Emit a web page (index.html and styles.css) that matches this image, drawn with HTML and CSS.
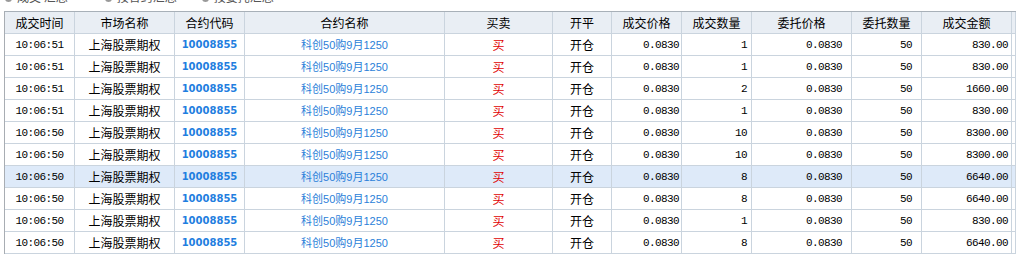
FILE: index.html
```html
<!DOCTYPE html>
<html lang="zh">
<head>
<meta charset="utf-8">
<link rel="stylesheet" href="styles.css">
</head>
<body>
<div class="tabs">
  <span class="tab"><i class="dot"></i>成交 汇总</span>
  <span class="tab t2"><i class="dot"></i>按合约汇总</span>
  <span class="tab t3"><i class="dot"></i>按委托汇总</span>
</div>
<div class="grid">
  <div class="row head">
    <div class="c">成交时间</div><div class="c">市场名称</div><div class="c">合约代码</div><div class="c">合约名称</div><div class="c">买卖</div><div class="c">开平</div><div class="c">成交价格</div><div class="c">成交数量</div><div class="c">委托价格</div><div class="c">委托数量</div><div class="c">成交金额</div><div class="c"></div>
  </div>
  <div class="row"><div class="c m">10:06:51</div><div class="c">上海股票期权</div><div class="c code">10008855</div><div class="c name">科创50购9月1250</div><div class="c buy">买</div><div class="c">开仓</div><div class="c m r p7">0.0830</div><div class="c m r p8">1</div><div class="c m r p9">0.0830</div><div class="c m r p10">50</div><div class="c m r p11">830.00</div><div class="c"></div></div>
  <div class="row"><div class="c m">10:06:51</div><div class="c">上海股票期权</div><div class="c code">10008855</div><div class="c name">科创50购9月1250</div><div class="c buy">买</div><div class="c">开仓</div><div class="c m r p7">0.0830</div><div class="c m r p8">1</div><div class="c m r p9">0.0830</div><div class="c m r p10">50</div><div class="c m r p11">830.00</div><div class="c"></div></div>
  <div class="row"><div class="c m">10:06:51</div><div class="c">上海股票期权</div><div class="c code">10008855</div><div class="c name">科创50购9月1250</div><div class="c buy">买</div><div class="c">开仓</div><div class="c m r p7">0.0830</div><div class="c m r p8">2</div><div class="c m r p9">0.0830</div><div class="c m r p10">50</div><div class="c m r p11">1660.00</div><div class="c"></div></div>
  <div class="row"><div class="c m">10:06:51</div><div class="c">上海股票期权</div><div class="c code">10008855</div><div class="c name">科创50购9月1250</div><div class="c buy">买</div><div class="c">开仓</div><div class="c m r p7">0.0830</div><div class="c m r p8">1</div><div class="c m r p9">0.0830</div><div class="c m r p10">50</div><div class="c m r p11">830.00</div><div class="c"></div></div>
  <div class="row"><div class="c m">10:06:50</div><div class="c">上海股票期权</div><div class="c code">10008855</div><div class="c name">科创50购9月1250</div><div class="c buy">买</div><div class="c">开仓</div><div class="c m r p7">0.0830</div><div class="c m r p8">10</div><div class="c m r p9">0.0830</div><div class="c m r p10">50</div><div class="c m r p11">8300.00</div><div class="c"></div></div>
  <div class="row"><div class="c m">10:06:50</div><div class="c">上海股票期权</div><div class="c code">10008855</div><div class="c name">科创50购9月1250</div><div class="c buy">买</div><div class="c">开仓</div><div class="c m r p7">0.0830</div><div class="c m r p8">10</div><div class="c m r p9">0.0830</div><div class="c m r p10">50</div><div class="c m r p11">8300.00</div><div class="c"></div></div>
  <div class="row sel"><div class="c m">10:06:50</div><div class="c">上海股票期权</div><div class="c code">10008855</div><div class="c name">科创50购9月1250</div><div class="c buy">买</div><div class="c">开仓</div><div class="c m r p7">0.0830</div><div class="c m r p8">8</div><div class="c m r p9">0.0830</div><div class="c m r p10">50</div><div class="c m r p11">6640.00</div><div class="c"></div></div>
  <div class="row"><div class="c m">10:06:50</div><div class="c">上海股票期权</div><div class="c code">10008855</div><div class="c name">科创50购9月1250</div><div class="c buy">买</div><div class="c">开仓</div><div class="c m r p7">0.0830</div><div class="c m r p8">8</div><div class="c m r p9">0.0830</div><div class="c m r p10">50</div><div class="c m r p11">6640.00</div><div class="c"></div></div>
  <div class="row"><div class="c m">10:06:50</div><div class="c">上海股票期权</div><div class="c code">10008855</div><div class="c name">科创50购9月1250</div><div class="c buy">买</div><div class="c">开仓</div><div class="c m r p7">0.0830</div><div class="c m r p8">1</div><div class="c m r p9">0.0830</div><div class="c m r p10">50</div><div class="c m r p11">830.00</div><div class="c"></div></div>
  <div class="row"><div class="c m">10:06:50</div><div class="c">上海股票期权</div><div class="c code">10008855</div><div class="c name">科创50购9月1250</div><div class="c buy">买</div><div class="c">开仓</div><div class="c m r p7">0.0830</div><div class="c m r p8">8</div><div class="c m r p9">0.0830</div><div class="c m r p10">50</div><div class="c m r p11">6640.00</div><div class="c"></div></div>
</div>
</body>
</html>
```
FILE: styles.css
```css
html, body {
  margin: 0;
  padding: 0;
  height: 254px;
  overflow: hidden;
  background: #fff;
}
body {
  font-family: "Noto Sans CJK SC", sans-serif;
  font-size: 12px;
  color: #000;
}
.tabs {
  height: 11px;
  overflow: hidden;
  display: flex;
  align-items: flex-start;
}
.tab {
  display: flex;
  align-items: flex-end;
  gap: 5px;
  color: #555;
  font-size: 12px;
  line-height: 12px;
  padding-left: 5px;
  margin-top: -9px;
}
.t2 { margin-left: 32px; }
.t3 { margin-left: 20px; }
.dot {
  display: block;
  width: 7px;
  height: 7px;
  border-radius: 50%;
  background: #999;
  margin-bottom: 1px;
}
.grid {
  margin-left: 4px;
  border-left: 1px solid #a8adb3;
  border-top: 1px solid #a8b0b8;
}
.row {
  display: grid;
  grid-template-columns: 70px 100px 70px 200px 108px 59px 70px 70px 100px 70px 90px 1fr;
  height: 22px;
}
.head {
  background: #e9eef4;
}
.sel {
  background: #deeaf9;
}
.c {
  box-sizing: border-box;
  border-right: 1px solid #cad4de;
  border-bottom: 1px solid #cad4de;
  display: flex;
  align-items: center;
  justify-content: center;
  white-space: nowrap;
  overflow: hidden;
  line-height: 14px;
}
.m {
  font-family: "Liberation Mono", monospace;
  font-size: 11px;
  letter-spacing: -0.6px;
}
.r { justify-content: flex-end; }
.p7 { padding-right: 2px; }
.p8 { padding-right: 4px; }
.p9 { padding-right: 9px; }
.p10 { padding-right: 9px; }
.p11 { padding-right: 3px; }
.code {
  font-family: "DejaVu Sans", sans-serif;
  font-weight: bold;
  font-size: 10px;
  color: #1f7ee0;
}
.name {
  font-family: "Liberation Sans", "Noto Sans CJK SC", sans-serif;
  font-size: 11px;
  color: #2b7fd9;
}
.buy {
  color: #e00000;
}
```
